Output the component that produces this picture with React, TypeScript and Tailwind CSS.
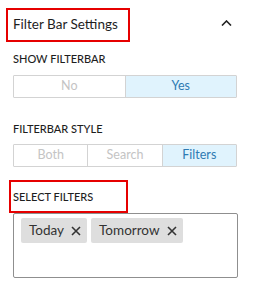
import React from "react";

const font = { fontFamily: 'Lato, "Liberation Sans", sans-serif' };

function Seg({ items, active }: { items: string[]; active: number }) {
  return (
    <div className="flex h-[23px] border border-[#d3d3d3] rounded-[1px]">
      {items.map((t, i) => (
        <div
          key={t}
          className={
            "flex-1 flex items-center justify-center text-[12.5px] " +
            (i > 0 ? "border-l border-[#d3d3d3] " : "") +
            (i === active ? "bg-[#e0f3fd] text-[#2e7ab3]" : "bg-white text-[#c4c4c4]")
          }
        >
          {t}
        </div>
      ))}
    </div>
  );
}

function Chip({ label }: { label: string }) {
  return (
    <div className="flex items-center h-[25px] bg-[#dedede] rounded-[2px] pl-[8px] pr-[6px] gap-[7px] text-[13.5px] text-[#333] whitespace-nowrap">
      <span>{label}</span>
      <svg width="10" height="10" viewBox="0 0 10 10" className="mt-[1px]">
        <path d="M1 1 L9 9 M9 1 L1 9" stroke="#333" strokeWidth="1.6" fill="none" />
      </svg>
    </div>
  );
}

export default function App() {
  return (
    <div className="w-[253px] h-[286px] bg-white" style={font}>
      <div className="flex items-center justify-between pt-[8px] pl-[6px] pr-[21px]">
        <div className="w-[124px] h-[34px] border-2 border-[#e60000] flex items-center pl-[5px] pb-[2px] text-[13.5px] text-[#1e1e1e] whitespace-nowrap">
          Filter Bar Settings
        </div>
        <svg width="11" height="6" viewBox="0 0 11 6" className="-mt-[5px]">
          <path d="M1 5.5 L5.5 1 L10 5.5" stroke="#222" strokeWidth="1.6" fill="none" />
        </svg>
      </div>
      <div className="pl-[13px] pr-[16px]">
        <div className="mt-[9px] text-[11px] leading-[16px] font-medium text-[#1e1e1e] whitespace-nowrap">SHOW FILTERBAR</div>
        <div className="mt-[8px]">
          <Seg items={["No", "Yes"]} active={1} />
        </div>
        <div className="mt-[23px] text-[11px] leading-[16px] font-medium text-[#1e1e1e] whitespace-nowrap">FILTERBAR STYLE</div>
        <div className="mt-[7px]">
          <Seg items={["Both", "Search", "Filters"]} active={2} />
        </div>
      </div>
      <div className="pl-[9px] mt-[13px]">
        <div className="w-[119px] h-[33px] border-2 border-[#e60000] flex items-end pl-[2px] pb-[6px] text-[11px] leading-[16px] font-medium text-[#1e1e1e] whitespace-nowrap">
          SELECT FILTERS
        </div>
      </div>
      <div className="pl-[13px] pr-[15px]">
        <div className="h-[65px] border border-[#8f8f8f] rounded-[2px] flex items-start gap-[4px] pl-[7px] pt-[4px]">
          <Chip label="Today" />
          <Chip label="Tomorrow" />
        </div>
      </div>
    </div>
  );
}
